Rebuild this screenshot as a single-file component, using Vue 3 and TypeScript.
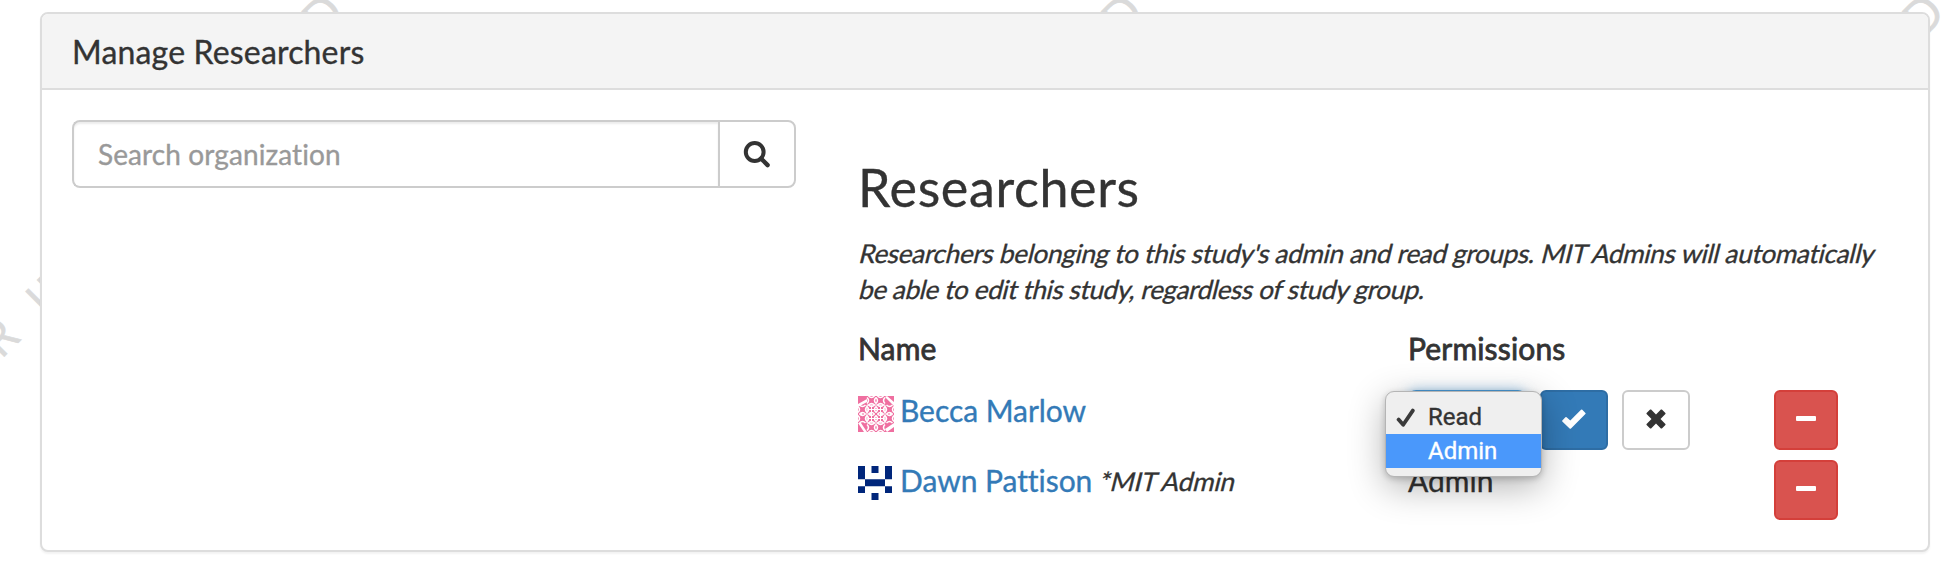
<script setup lang="ts">
import { ref } from 'vue'

interface Researcher {
  name: string
  note?: string
  permission: 'Read' | 'Admin'
  editing: boolean
}

const query = ref('')
const options = ['Read', 'Admin'] as const
const hovered = ref<string>('Admin')

const researchers = ref<Researcher[]>([
  { name: 'Becca Marlow', permission: 'Read', editing: true },
  { name: 'Dawn Pattison', note: '*MIT Admin', permission: 'Admin', editing: false },
])

const watermarkColumns = [322.5, 1122, 1923]
const cells = [3.5, 12.5, 23.5, 32.5]
</script>

<template>
  <div class="page">
    <svg class="watermark" width="1950" height="576" aria-hidden="true">
      <text v-for="x in watermarkColumns" :key="x" :transform="`translate(${x} 39) rotate(-45)`">D</text>
      <text transform="translate(1 360) rotate(-45)">R</text>
      <text transform="translate(46.5 319) rotate(-45)">I</text>
      <text transform="translate(58 307.5) rotate(-45)">N</text>
    </svg>

    <section class="panel">
      <header class="panel-heading">Manage Researchers</header>
      <div class="panel-body">
        <form class="search" @submit.prevent>
          <input v-model="query" class="search-input" type="text" placeholder="Search organization" />
          <button class="search-btn" type="submit" aria-label="Search">
            <svg width="28" height="28" viewBox="0 0 28 28">
              <circle cx="11.7" cy="12" r="8.9" fill="none" stroke="#333" stroke-width="4" />
              <path d="M18 18.5L24.6 25.1" stroke="#333" stroke-width="4.4" stroke-linecap="round" />
            </svg>
          </button>
        </form>

        <div class="researchers">
          <h3>Researchers</h3>
          <p class="hint">
            <span class="slanted">Researchers belonging to this study's admin and read groups. MIT Admins will automatically</span>
            <span class="slanted tight">be able to edit this study, regardless of study group.</span>
          </p>
          <div class="row head">
            <span>Name</span>
            <span>Permissions</span>
          </div>
          <div v-for="(r, i) in researchers" :key="r.name" class="row">
            <div class="who">
              <svg v-if="i === 0" class="avatar" width="36" height="36" viewBox="0 0 36 36">
                <rect width="36" height="36" fill="#ef6fa0" />
                <g fill="none" stroke="#fff" stroke-width="1.5">
                  <template v-for="y in [0, 9, 18, 27]" :key="y">
                    <template v-for="x in [0, 9, 18, 27]" :key="x">
                      <path
                        v-if="!((x === 0 || x === 27) && (y === 0 || y === 27))"
                        :d="`M${x + 1.5} ${y}Q${x + 4.5} ${y + 3} ${x + 7.5} ${y}M${x + 1.5} ${y + 9}Q${x + 4.5} ${y + 6} ${x + 7.5} ${y + 9}M${x} ${y + 1.5}Q${x + 3} ${y + 4.5} ${x} ${y + 7.5}M${x + 9} ${y + 1.5}Q${x + 6} ${y + 4.5} ${x + 9} ${y + 7.5}`"
                      />
                    </template>
                  </template>
                </g>
                <path d="M0 8L9 3V6L0 11ZM29 0L36 6V10L27 1ZM0 27L6 36H9L3 27ZM27 33L36 27V31L29 36Z" fill="#fff" />
                <path d="M13.5 9.5V26.5M22.5 9.5V26.5M9.5 13.5H26.5M9.5 22.5H26.5" stroke="#fff" stroke-width="1" />
                <path d="M9 9V27M27 9V27M9 9H27M9 27H27" stroke="#fff" stroke-width="1" fill="none" />
                <g fill="#fff"><circle v-for="c in cells" :key="c" :cx="c" cy="18" r="1" /></g>
              </svg>
              <svg v-else class="avatar small" width="34" height="34" viewBox="0 0 34 34" fill="#00267b">
                <path d="M0 0H7V13.3H0ZM13.5 0H20.5V7H13.5ZM27 0H34V13.3H27ZM7 13.3H27V20.3H7ZM0 20.3H7V27H0ZM27 20.3H34V27H27ZM13.5 27H20.5V34H13.5Z" />
              </svg>
              <a>{{ r.name }}</a>
              <span v-if="r.note" class="note slanted">{{ r.note }}</span>
            </div>

            <div v-if="r.editing" class="edit">
              <div class="select">
                <ul class="menu">
                  <li v-for="o in options" :key="o" :class="{ active: hovered === o }" @mouseenter="hovered = o" @click="r.permission = o">
                    <svg v-if="r.permission === o" class="tick" width="20" height="20" viewBox="0 0 20 20">
                      <path d="M2.6 11.6L7.2 16.8L16.8 2.6" fill="none" stroke="#3a3a3a" stroke-width="3.8" stroke-linecap="round" stroke-linejoin="round" />
                    </svg>
                    {{ o }}
                  </li>
                </ul>
              </div>
              <button class="btn primary" aria-label="Save">
                <svg width="26" height="22" viewBox="0 0 26 22">
                  <path d="M1.3 12.4L4.4 9.2Q5 8.7 5.6 9.2L9.3 12.6L20 1.8Q20.7 1.2 21.3 1.8L24.4 4.9Q25 5.5 24.4 6.1L10 20.5Q9.3 21.1 8.6 20.5L1.3 13.6Q.8 13 1.3 12.4Z" fill="#fff" />
                </svg>
              </button>
              <button class="btn plain" aria-label="Cancel">
                <svg width="20" height="20" viewBox="0 0 20 20">
                  <path d="M5.1.6L10 5.5L14.9.6Q15.4.2 15.9.6L19.4 4.1Q19.8 4.6 19.4 5.1L14.5 10L19.4 14.9Q19.8 15.4 19.4 15.9L15.9 19.4Q15.4 19.8 14.9 19.4L10 14.5L5.1 19.4Q4.6 19.8 4.1 19.4L.6 15.9Q.2 15.4.6 14.9L5.5 10L.6 5.1Q.2 4.6.6 4.1L4.1.6Q4.6.2 5.1.6Z" fill="#333" />
                </svg>
              </button>
            </div>
            <div v-else class="perm">{{ r.permission }}</div>

            <button class="btn danger" aria-label="Remove"><span class="minus"></span></button>
          </div>
        </div>
      </div>
    </section>
  </div>
</template>

<style>
body {
  margin: 0;
  background: #fff;
}
</style>

<style scoped>
.page,
.page * {
  box-sizing: border-box;
}
.page {
  position: relative;
  height: 576px;
  padding: 12px 20px 0 40px;
  overflow: hidden;
  font: 30px/40px Lato, sans-serif;
  font-variant-ligatures: none;
  color: #333;
  -webkit-text-stroke: 0.35px;
}
.watermark {
  position: absolute;
  left: 0;
  top: 0;
  fill: #dadada;
  stroke: #dadada;
  stroke-width: 0.6px;
  font: 48px 'Open Sans', sans-serif;
}
.panel {
  position: relative;
  height: 540px;
  border: 2px solid #ddd;
  border-radius: 8px;
  background: #fff;
  box-shadow: 0 2px 2px rgba(0, 0, 0, 0.05);
}
.panel-heading {
  height: 76px;
  padding: 20px 30px;
  border-bottom: 2px solid #ddd;
  border-radius: 6px 6px 0 0;
  background: #f4f4f4;
  font-size: 32px;
  line-height: 35px;
  letter-spacing: 0.17px;
}
.panel-body {
  display: flex;
  gap: 62px;
  padding: 30px;
}
.search {
  display: flex;
  width: 724px;
  height: 68px;
}
.search-input {
  flex: 1;
  min-width: 0;
  padding: 0 24px;
  border: 2px solid #ccc;
  border-right: 0;
  border-radius: 8px 0 0 8px;
  background: #fff;
  box-shadow: inset 0 2px 2px rgba(0, 0, 0, 0.075);
  font: 28px Lato, sans-serif;
  font-variant-ligatures: none;
  letter-spacing: 0.1px;
  color: #555;
  outline: none;
}
.search-input::placeholder {
  color: #999;
  opacity: 1;
}
.search-btn {
  width: 78px;
  padding: 0;
  display: grid;
  place-items: center;
  border: 2px solid #ccc;
  border-radius: 0 8px 8px 0;
  background: #fff;
}
.researchers {
  flex: 1;
}
h3 {
  margin: 39px 0 0;
  font-size: 52px;
  font-weight: 400;
  line-height: 57px;
  letter-spacing: 0.65px;
}
.hint {
  margin: 19px 0 0;
  font-size: 26px;
  line-height: 36px;
  letter-spacing: -0.275px;
  white-space: nowrap;
}
.slanted {
  transform: skewX(-14deg);
  transform-origin: 0 27px;
}
.hint .slanted {
  display: block;
}
.hint .tight {
  letter-spacing: -0.37px;
}
.row {
  display: grid;
  grid-template-columns: 550px 366px 64px;
  height: 70px;
}
.head {
  height: 83px;
  padding-top: 19px;
  line-height: 44px;
  letter-spacing: 0.15px;
  -webkit-text-stroke: 0.8px #333;
}
.who {
  display: flex;
  align-items: flex-start;
}
.avatar {
  flex: none;
  margin: 6px 6px 0 0;
}
.avatar.small {
  margin-right: 8px;
}
.who a {
  color: #337ab7;
  letter-spacing: -0.05px;
}
.note {
  margin-left: 7px;
  font-size: 26px;
  line-height: 43px;
  letter-spacing: -0.15px;
}
.perm {
  line-height: 40px;
}
.edit {
  display: flex;
}
.select {
  position: relative;
  width: 118px;
  height: 60px;
  margin-right: 14px;
  border: 2px solid #4a9bd8;
  border-radius: 8px;
  box-shadow: 0 0 12px rgba(102, 175, 233, 0.6);
}
.menu {
  position: absolute;
  left: -25px;
  top: -1px;
  z-index: 2;
  width: 157px;
  height: 86px;
  margin: 0;
  padding: 8px 0;
  border: 1px solid #b5b5b5;
  border-radius: 9px;
  background: #efefef;
  box-shadow: 0 10px 36px rgba(0, 0, 0, 0.3), 0 2px 6px rgba(0, 0, 0, 0.2);
  list-style: none;
  font: 24px/34px Roboto, sans-serif;
}
.menu li {
  position: relative;
  height: 34px;
  padding-left: 42px;
}
.menu li.active {
  background: #4a98fb;
  color: #fff;
}
.tick {
  position: absolute;
  left: 10px;
  top: 8px;
}
.btn {
  display: grid;
  place-items: center;
  width: 68px;
  height: 60px;
  padding: 0 0 3px;
  border: 2px solid #ccc;
  border-radius: 6px;
}
.primary {
  margin-right: 14px;
  border-color: #2e6da4;
  background: #337ab7;
}
.plain {
  background: #fff;
}
.danger {
  width: 64px;
  border-color: #d43f3a;
  background: #d9534f;
}
.minus {
  width: 20px;
  height: 5px;
  border-radius: 1px;
  background: #fff;
}
</style>
